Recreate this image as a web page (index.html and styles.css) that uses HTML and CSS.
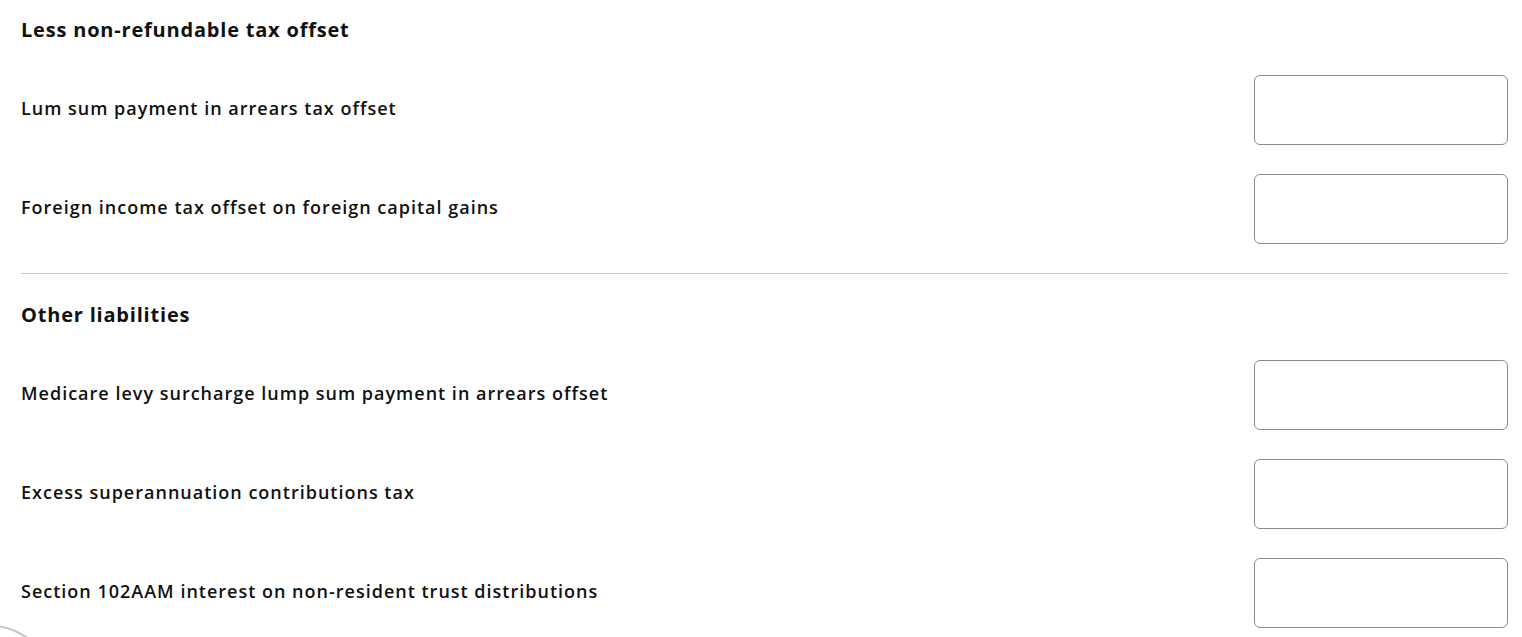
FILE: index.html
```html
<!doctype html>
<html lang="en">
<head>
  <meta charset="utf-8">
  <title>Tax offsets and liabilities</title>
  <link rel="stylesheet" href="styles.css">
</head>
<body>
  <div class="form">
    <section class="group first">
      <h2 class="group-title">Less non-refundable tax offset</h2>
      <div class="row">
        <label class="row-label" for="lumpsum">Lum sum payment in arrears tax offset</label>
        <input class="row-input" id="lumpsum" type="text">
      </div>
      <div class="row">
        <label class="row-label" for="foreign">Foreign income tax offset on foreign capital gains</label>
        <input class="row-input" id="foreign" type="text">
      </div>
    </section>

    <section class="group">
      <h2 class="group-title">Other liabilities</h2>
      <div class="row">
        <label class="row-label" for="medicare">Medicare levy surcharge lump sum payment in arrears offset</label>
        <input class="row-input" id="medicare" type="text">
      </div>
      <div class="row">
        <label class="row-label" for="super">Excess superannuation contributions tax</label>
        <input class="row-input" id="super" type="text">
      </div>
      <div class="row">
        <label class="row-label" for="section">Section 102AAM interest on non-resident trust distributions</label>
        <input class="row-input" id="section" type="text">
      </div>
    </section>
  </div>

  <div class="float-btn"></div>
</body>
</html>
```

FILE: styles.css
```css
body {
  margin: 0;
  background: #fff;
  color: #111;
  font-family: 'Open Sans', 'Noto Sans', sans-serif;
  overflow: hidden;
}

.form {
  padding: 0 14px 0 21px;
}

.group {
  padding-top: 29px;
}

.group.first {
  padding-top: 18px;
  border-bottom: 1px solid #c8c8c8;
}

.group-title {
  margin: 0 0 33px;
  font-size: 20px;
  line-height: 24px;
  font-weight: 700;
  letter-spacing: 0.8px;
}

.row {
  display: flex;
  align-items: center;
  justify-content: space-between;
  margin-bottom: 29px;
}

.row-label {
  font-size: 18px;
  font-weight: 600;
  letter-spacing: 1px;
  margin-top: -5px;
}

.row-input {
  box-sizing: border-box;
  width: 254px;
  height: 70px;
  border: 1px solid #8c8c8c;
  border-radius: 6px;
  background: #fff;
  margin: 0;
}

.float-btn {
  position: fixed;
  left: -91px;
  top: 624px;
  width: 148px;
  height: 148px;
  border-radius: 50%;
  border: 2px solid #c4c4c4;
  background: #fff;
}
```
